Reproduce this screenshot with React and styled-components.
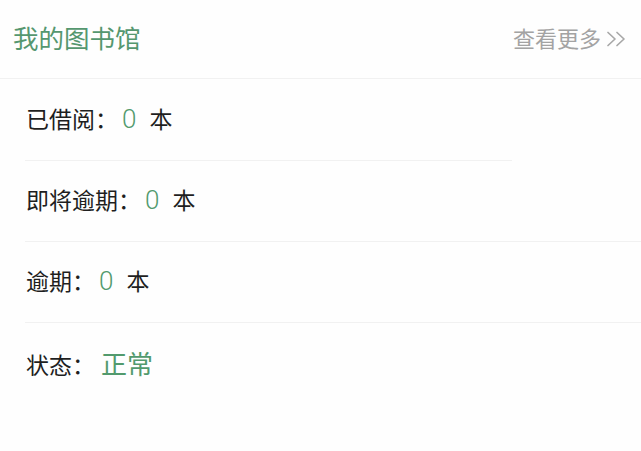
import React from 'react';
import styled, {createGlobalStyle} from 'styled-components';

const GlobalStyle = createGlobalStyle`
  body {
    margin: 0;
    background: #fefefe;
    font-family: "Noto Sans CJK SC", "Noto Sans", sans-serif;
  }
`;

const rows = [
    {label: "已借阅：", value: "0", unit: "本", inset: 129},
    {label: "即将逾期：", value: "0", unit: "本", inset: 0},
    {label: "逾期：", value: "0", unit: "本", inset: 0},
    {label: "状态：", value: "正常", big: true, full: true},
];

const App = () => {
    return (
        <>
            <GlobalStyle/>
            <Card>
                <Header>
                    <Title>我的图书馆</Title>
                    <More>
                        查看更多
                        <svg width="22" height="16" viewBox="0 0 22 16" fill="none"
                             stroke="#a8a8a8" strokeWidth="1.7" strokeLinecap="round" strokeLinejoin="round">
                            <path d="M2 1.5 L9 8 L2 14.5"/>
                            <path d="M11 1.5 L18 8 L11 14.5"/>
                        </svg>
                    </More>
                </Header>
                {rows.map((r) => (
                    <Row key={r.label} $inset={r.inset} $full={r.full}>
                        <Line>
                            <Label>{r.label}</Label>
                            <Value $big={r.big}>{r.value}</Value>
                            {r.unit && <Unit>{r.unit}</Unit>}
                        </Line>
                    </Row>
                ))}
            </Card>
        </>
    )
}

export default App;


const Card = styled.section`
  width: 641px;
  display: flex;
  flex-direction: column;
`;

const Header = styled.header`
  height: 79px;
  border-bottom: 1px solid #f1f1f1;
  display: flex;
  align-items: center;
  justify-content: space-between;
  padding: 0 13px 5px 13px;
  box-sizing: border-box;
`;

const Title = styled.h2`
  margin: 0;
  font-size: 25.5px;
  font-weight: 400;
  color: #55976f;
`;

const More = styled.span`
  display: flex;
  align-items: center;
  gap: 5px;
  font-size: 22px;
  color: #a3a3a3;

  svg {
    margin-top: 5px;
  }
`;

const Row = styled.div`
  position: relative;
  height: 80px;
  display: flex;
  align-items: center;
  padding: 0 26px 0 26px;
  box-sizing: border-box;
  margin-top: 1px;

  &::after {
    content: "";
    position: absolute;
    left: ${p => p.$full ? 0 : 25}px;
    right: ${p => p.$inset || 0}px;
    bottom: -1px;
    height: 1px;
    background: #f1f1f1;
  }
`;

const Line = styled.div`
  display: flex;
  align-items: baseline;
  line-height: 1.3;
`;

const Label = styled.span`
  font-size: 23px;
  color: #1f1f1f;
`;

const Value = styled.span`
  margin-left: ${p => p.$big ? 6 : 4}px;
  font-family: ${p => p.$big ? '"Noto Sans CJK SC", sans-serif' : 'Roboto, sans-serif'};
  font-weight: ${p => p.$big ? 400 : 300};
  font-size: 26px;
  color: #529a6d;
`;

const Unit = styled.span`
  margin-left: 13px;
  font-size: 23px;
  color: #1f1f1f;
`;
